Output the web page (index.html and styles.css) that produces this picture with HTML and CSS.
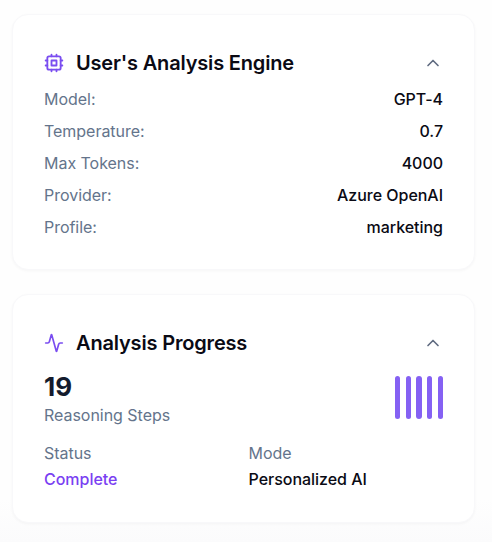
FILE: index.html
```html
<!DOCTYPE html>
<html lang="en">
<head>
<meta charset="utf-8">
<title>Analysis</title>
<link rel="stylesheet" href="styles.css">
</head>
<body>
<main class="stack">
  <section class="card card-engine">
    <header class="card-head">
      <svg class="icon" viewBox="0 0 24 24" fill="none" stroke="currentColor" stroke-width="2.2" stroke-linecap="round" stroke-linejoin="round"><rect x="4" y="4" width="16" height="16" rx="2"/><rect x="9" y="9" width="6" height="6"/><path d="M15 2v2M15 20v2M2 15h2M2 9h2M20 15h2M20 9h2M9 2v2M9 20v2"/></svg>
      <h2 class="title">User's Analysis Engine</h2>
      <svg class="chev" viewBox="0 0 24 24" fill="none" stroke="currentColor" stroke-width="2" stroke-linecap="round" stroke-linejoin="round"><path d="m18 15-6-6-6 6"/></svg>
    </header>
    <dl class="rows">
      <div class="row"><dt>Model:</dt><dd>GPT-4</dd></div>
      <div class="row"><dt>Temperature:</dt><dd>0.7</dd></div>
      <div class="row"><dt>Max Tokens:</dt><dd>4000</dd></div>
      <div class="row"><dt>Provider:</dt><dd>Azure OpenAI</dd></div>
      <div class="row"><dt>Profile:</dt><dd>marketing</dd></div>
    </dl>
  </section>
  <section class="card card-progress">
    <header class="card-head">
      <svg class="icon" viewBox="0 0 24 24" fill="none" stroke="currentColor" stroke-width="2" stroke-linecap="round" stroke-linejoin="round"><path d="M22 12h-2.48a2 2 0 0 0-1.93 1.46l-2.35 8.36a.25.25 0 0 1-.48 0L9.24 2.18a.25.25 0 0 0-.48 0l-2.35 8.36A2 2 0 0 1 4.49 12H2"/></svg>
      <h2 class="title">Analysis Progress</h2>
      <svg class="chev" viewBox="0 0 24 24" fill="none" stroke="currentColor" stroke-width="2" stroke-linecap="round" stroke-linejoin="round"><path d="m18 15-6-6-6 6"/></svg>
    </header>
    <div class="summary">
      <div>
        <div class="count">19</div>
        <div class="label">Reasoning Steps</div>
      </div>
      <div class="bars"><span class="bar"></span><span class="bar"></span><span class="bar"></span><span class="bar"></span><span class="bar"></span></div>
    </div>
    <div class="meta">
      <div><div class="label">Status</div><div class="value accent">Complete</div></div>
      <div><div class="label">Mode</div><div class="value">Personalized AI</div></div>
    </div>
  </section>
</main>
</body>
</html>
```
FILE: styles.css
```css
* { box-sizing: border-box; }
html, body { margin: 0; padding: 0; }
body {
  width: 492px;
  height: 542px;
  overflow: hidden;
  background: linear-gradient(#fefefe 0%, #fefefe 92%, #fbfbfc 100%);
  font-family: Inter, "Liberation Sans", sans-serif;
  font-size: 16px;
  letter-spacing: -0.03px;
  color: #0a0a14;
}
.stack {
  display: flex;
  flex-direction: column;
  gap: 24px;
  padding: 14px 17px 0 12px;
}
.card {
  background: #fff;
  border: 1px solid #f8f8fa;
  border-radius: 16px;
  box-shadow: 0 1px 3px rgba(15, 23, 42, 0.035);
  padding: 31px;
}
.card-engine { height: 256px; }
.card-progress { height: 229px; }
.card-head {
  display: flex;
  align-items: center;
  gap: 12px;
  height: 32px;
  position: relative;
  top: 1px;
}
.icon { width: 20px; height: 20px; color: #7a4df0; flex: none; }
.title { flex: 1; margin: 0; font-size: 20px; font-weight: 600; letter-spacing: -0.17px; color: #0a0a14; }
.chev { width: 20px; height: 20px; color: #5f6b80; flex: none; }
.rows { margin: 9px 0 0; display: flex; flex-direction: column; gap: 8px; }
.row { display: flex; justify-content: space-between; line-height: 24px; }
dt { color: #64748b; }
dd { margin: 0; font-weight: 470; }
.summary { display: flex; justify-content: space-between; align-items: flex-start; margin-top: 13px; }
.count { font-size: 26px; font-weight: 700; line-height: 32px; color: #141b2d; }
.label { color: #64748b; line-height: 24px; }
.bars { display: flex; gap: 5.33px; padding-top: 5px; }
.bar { width: 5.33px; height: 43px; border-radius: 3px; background: #8561f3; }
.meta { display: grid; grid-template-columns: 1fr 1fr; gap: 10px; margin-top: 14px; }
.value { font-weight: 470; line-height: 24px; margin-top: 2px; }
.accent { color: #7a3ff2; }
```
